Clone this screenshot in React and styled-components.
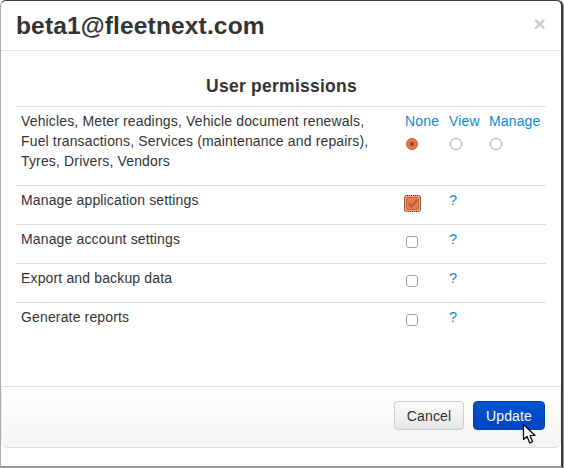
import React from "react";
import styled, { createGlobalStyle } from "styled-components";

const Global = createGlobalStyle`
  html, body { margin: 0; padding: 0; background: #fff; }
  body { font-family: "Liberation Sans", Arial, sans-serif; font-size: 14px; line-height: 20px; letter-spacing: 0.15px; color: #333; }
`;

const Modal = styled.div`
  box-sizing: border-box;
  width: 563px;
  height: 468px;
  display: flex;
  flex-direction: column;
  background: #fff;
  border-style: solid;
  border-color: #3c3c3c #3a3a3a #999 #aaa;
  border-width: 1px 2px 2px 1px;
  border-radius: 6px 6px 0 0;
  box-shadow: 1px 0 0 #999;
  position: relative;
`;

const Header = styled.header`
  height: 49px;
  box-sizing: content-box;
  flex: none;
  border-bottom: 1px solid #e5e5e5;
  display: flex;
  align-items: center;
  justify-content: space-between;
  padding: 0 15px 0 15px;
`;

const Title = styled.h3`
  margin: 0;
  font-size: 24.5px;
  font-weight: bold;
  line-height: 30px;
  color: #333;
`;

const Close = styled.span`
  font-size: 21px;
  font-weight: bold;
  color: #000;
  opacity: 0.2;
  line-height: 20px;
  margin-top: -3px;
`;

const Body = styled.main`
  flex: 1;
  padding: 0 15px;
`;

const Heading = styled.h4`
  margin: 0;
  padding: 25px 0 0 1px;
  height: 30px;
  line-height: 20px;
  font-size: 17.5px;
  font-weight: bold;
  letter-spacing: 0.25px;
  text-align: center;
  color: #333;
`;

const Table = styled.div`
  width: 530px;
  border-top: 1px solid #ddd;
`;

const Row = styled.div`
  box-sizing: border-box;
  display: grid;
  grid-template-columns: 384px 1fr;
  height: ${(p) => p.$height}px;
  padding: 4px 5px;
  border-bottom: 1px solid #ddd;
  &:last-child { border-bottom: 0; }
`;

const Label = styled.div`
  color: #333;
`;

const Options = styled.div`
  display: grid;
  grid-template-columns: 44px 40px auto;
`;

const Col = styled.div`
  display: flex;
  flex-direction: column;
  align-items: flex-start;
`;

const ColTitle = styled.a`
  color: #0d8bd6;
  line-height: 20px;
  margin-bottom: 7px;
`;

const Radio = styled.span`
  box-sizing: border-box;
  width: 12px;
  height: 12px;
  margin-left: 1px;
  border-radius: 50%;
  border: 1px solid ${(p) => (p.$on ? "#cf5f38" : "#a8a8a8")};
  background: ${(p) => (p.$on ? "#ec7548" : "#fff")};
  display: flex;
  align-items: center;
  justify-content: center;
  &::after {
    content: "";
    display: ${(p) => (p.$on ? "block" : "none")};
    width: 4px;
    height: 4px;
    border-radius: 50%;
    background: #8a4a34;
  }
`;

const Check = styled.span`
  box-sizing: border-box;
  display: block;
  width: 12px;
  height: 12px;
  margin: 7px 0 0 1px;
  border: 1px solid #a0a0a0;
  border-radius: 3px;
  background: #fff;
`;

const CheckedBox = styled.span`
  box-sizing: border-box;
  display: flex;
  align-items: center;
  justify-content: center;
  width: 17px;
  height: 17px;
  margin: 5px 0 0 -1px;
  border: 1px dotted #222;
  border-radius: 3px;
  background: #f5a582;
`;

const Help = styled.a`
  color: #0d8bd6;
  font-size: 14.5px;
  line-height: 20px;
`;

const Footer = styled.footer`
  box-sizing: border-box;
  flex: none;
  height: 62px;
  margin-bottom: 18px;
  padding: 14px 15px 0 0;
  display: flex;
  justify-content: flex-end;
  gap: 9px;
  background: linear-gradient(#ffffff, #f4f4f4);
  border: 1px solid #ddd;
  border-left-color: #eee;
  border-right-color: #eee;
  border-radius: 0 0 6px 6px;
`;

const Button = styled.button`
  box-sizing: border-box;
  height: 29px;
  width: ${(p) => p.$width}px;
  padding: 0;
  font: 14px/20px "Liberation Sans", Arial, sans-serif;
  letter-spacing: 0.15px;
  border-radius: 4px;
  color: ${(p) => (p.$primary ? "#fff" : "#333")};
  background: ${(p) => (p.$primary ? "linear-gradient(#0055cc, #0044c4)" : "linear-gradient(#fbfbfb, #e6e6e6)")};
  border: 1px solid ${(p) => (p.$primary ? "#0044aa" : "#ccc")};
`;

const Cursor = styled.svg`
  position: absolute;
  left: 521px;
  top: 422px;
`;

const items = ["Manage application settings", "Manage account settings", "Export and backup data", "Generate reports"];

export default function App() {
  return (
    <>
      <Global />
      <Modal>
        <Header>
          <Title>beta1@fleetnext.com</Title>
          <Close>×</Close>
        </Header>
        <Body>
          <Heading>User permissions</Heading>
          <Table>
            <Row $height={79}>
              <Label>
                Vehicles, Meter readings, Vehicle document renewals,
                <br />
                Fuel transactions, Services (maintenance and repairs),
                <br />
                Tyres, Drivers, Vendors
              </Label>
              <Options>
                <Col><ColTitle>None</ColTitle><Radio $on /></Col>
                <Col><ColTitle>View</ColTitle><Radio /></Col>
                <Col><ColTitle>Manage</ColTitle><Radio /></Col>
              </Options>
            </Row>
            {items.map((t, i) => (
              <Row key={t} $height={39}>
                <Label>{t}</Label>
                <Options>
                  {i === 0 ? (
                    <CheckedBox>
                      <svg width="13" height="13" viewBox="0 0 13 13">
                        <rect x="0.5" y="0.5" width="12" height="12" rx="1.5" fill="#ea7a4e" stroke="#c9633c" />
                        <path d="M3 6.5 L5.5 9.5 L11 3" fill="none" stroke="#a85a3c" strokeWidth="1.8" />
                      </svg>
                    </CheckedBox>
                  ) : (
                    <Check />
                  )}
                  <Help>?</Help>
                </Options>
              </Row>
            ))}
          </Table>
        </Body>
        <Footer>
          <Button $width={70}>Cancel</Button>
          <Button $primary $width={72}>Update</Button>
        </Footer>
        <Cursor width="16" height="22" viewBox="0 0 16 22">
          <path d="M1.5 1.5 V16.5 L5 13.5 L7.8 20 L10.5 18.8 L8 12.5 H13 Z" fill="#fff" stroke="#000" strokeWidth="1.2" strokeLinejoin="round" />
        </Cursor>
      </Modal>
    </>
  );
}
